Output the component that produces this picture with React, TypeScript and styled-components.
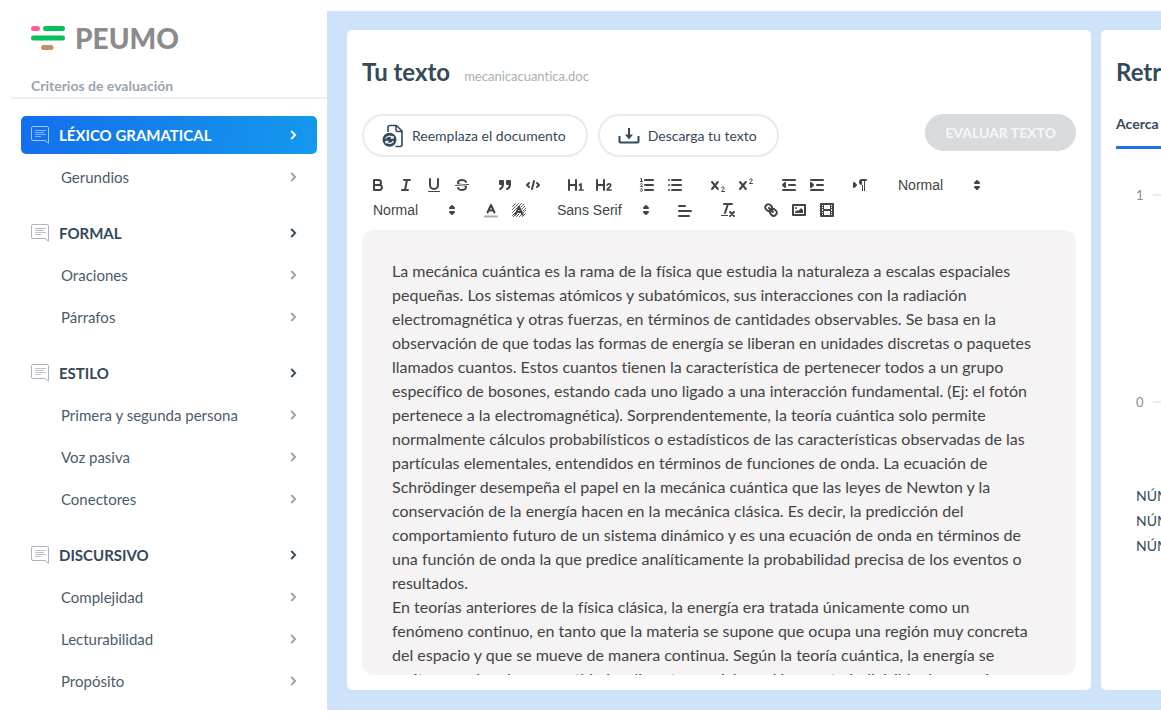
import React from 'react';
import styled, { createGlobalStyle, css } from 'styled-components';

const GlobalStyle = createGlobalStyle`
  *, *::before, *::after { box-sizing: border-box; }
  body {
    margin: 0;
    background: #fff;
    color: #34495a;
    font-family: Lato, "Open Sans", sans-serif;
    font-variant-ligatures: none;
    overflow: hidden;
  }
  button, select { font-family: inherit; color: inherit; }
`;

const Page = styled.div`
  display: flex;
  align-items: flex-start;
  min-height: 100vh;
  overflow: hidden;
`;

/* ---------- Sidebar ---------- */

const Sidebar = styled.aside`
  flex: 0 0 327px;
  padding: 23px 0 0 11px;
`;

const Brand = styled.a`
  display: flex;
  align-items: center;
  gap: 10px;
  height: 30px;
  margin-left: 20px;
  color: #8b8b8b;
  font-size: 28px;
  font-weight: 900;
  line-height: 30px;
  text-decoration: none;
`;

const SidebarTitle = styled.h2`
  margin: 0;
  padding: 23px 0 1px 20px;
  border-bottom: 2px solid #edf2f7;
  color: #9aa4ae;
  font-size: 14px;
  font-weight: 700;
  line-height: 20px;
`;

const Criteria = styled.nav`
  display: flex;
  flex-direction: column;
  gap: 18px;
  padding: 17px 10px 0;
`;

const CriteriaGroup = styled.section`
  display: flex;
  flex-direction: column;
  gap: 4px;
`;

const rowBase = css`
  display: flex;
  align-items: center;
  width: 100%;
  height: 38px;
  border: 0;
  border-radius: 5px;
  background: none;
  font-size: 15px;
  line-height: 20px;
  text-align: left;
  cursor: pointer;
`;

const GroupButton = styled.button<{ $active?: boolean }>`
  ${rowBase}
  gap: 10px;
  padding: 0 20px 0 10px;
  font-weight: 700;
  ${(p) => p.$active && css`
    background: linear-gradient(100deg, #146eee, #1499ec);
    color: #fff;
  `}
`;

const ItemButton = styled.button`
  ${rowBase}
  padding: 0 20px 0 40px;
  color: #4a5c6b;
`;

const RowLabel = styled.span`
  flex: 1;
`;

const CommentIcon = ({ active }: { active?: boolean }) => (
  <svg width="18" height="18" viewBox="0 0 18 18" fill="none" stroke={active ? '#9cc8fa' : '#b0b3bd'}>
    <path d="M17.500 17.200 14 14.500H2A1.500 1.500 0 0 1 .5 13V2A1.500 1.500 0 0 1 2 .5h14A1.500 1.500 0 0 1 17.500 2Z" />
    <path d="M4 4.500h11M4 6.500h9M4 8.500h11M4 10.500h6" strokeOpacity=".8" />
  </svg>
);

const Chevron = ({ color }: { color: string }) => (
  <svg width="7" height="10" viewBox="0 0 7 10" fill="none" stroke={color} strokeWidth="1.800">
    <path d="m1.200 1 4 4-4 4" />
  </svg>
);

/* ---------- Workspace ---------- */

const Workspace = styled.main`
  flex: 1;
  min-width: 0;
  display: grid;
  grid-template-columns: minmax(0, 1fr) 60px;
  gap: 10px;
  margin-top: 11px;
  padding: 19px 0 20px 20px;
  background: #cfe2fb;
`;

const EditorCard = styled.section`
  min-width: 0;
  padding: 24px 15px 15px;
  border-radius: 5px;
  background: #fff;
`;

const CardHeader = styled.header`
  display: flex;
  align-items: baseline;
  gap: 14px;
  height: 36px;
  white-space: nowrap;
`;

const CardTitle = styled.h1`
  margin: 0;
  font-size: 24px;
  font-weight: 700;
  line-height: 36px;
`;

const FileName = styled.span`
  color: #a7afb7;
  font-size: 13px;
`;

const Actions = styled.div`
  display: flex;
  align-items: flex-start;
  gap: 10px;
  margin-top: 24px;
`;

const OutlineButton = styled.button`
  display: flex;
  align-items: center;
  gap: 8px;
  height: 43px;
  padding: 0 20px 0 18px;
  border: 2px solid #e9eaeb;
  border-radius: 22px;
  background: #fff;
  font-size: 14px;
  white-space: nowrap;
  cursor: pointer;
`;

const EvaluateButton = styled.button`
  height: 37px;
  margin-left: auto;
  padding: 0 20px;
  border: 0;
  border-radius: 19px;
  background: #d7dbde;
  color: #f6f7f8;
  font-size: 14px;
  font-weight: 700;
  white-space: nowrap;
`;

const Toolbar = styled.div`
  display: flex;
  flex-wrap: wrap;
  gap: 1px 15px;
  margin-top: 16px;
  padding: 0 80px 0 2px;
  color: #444;
`;

const ToolGroup = styled.div`
  display: flex;
`;

const ToolButton = styled.button`
  width: 28px;
  height: 24px;
  padding: 3px 5px;
  border: 0;
  background: none;
  cursor: pointer;
`;

const Glyph = styled.svg`
  display: block;
  width: 18px;
  height: 18px;
  fill: none;
  stroke: #444;
  stroke-width: 2;
  stroke-linecap: round;
  stroke-linejoin: round;

  .fill { fill: #444; stroke: none; }
  .both { fill: #444; }
  .thin { stroke-width: 1; }
  .even { fill-rule: evenodd; }
`;

const Picker = styled.label<{ $wide?: boolean }>`
  display: grid;
  grid-template-columns: 1fr 18px;
  align-items: center;
  width: ${(p) => (p.$wide ? 108 : 98)}px;
  height: 24px;
`;

const PickerSelect = styled.select`
  grid-area: 1 / 1 / 2 / 3;
  width: 100%;
  height: 24px;
  padding: 0 18px 0 9px;
  border: 0;
  appearance: none;
  background: none;
  font-family: "Liberation Sans", Arial, sans-serif;
  font-size: 14px;
  line-height: 24px;
`;

const PickerArrows = styled(Glyph)`
  grid-area: 1 / 2 / 2 / 3;
  pointer-events: none;
`;

const Editor = styled.article`
  height: calc(100vh - 280px);
  min-height: 200px;
  margin-top: 8px;
  padding: 29px 30px 0;
  border-radius: 12px;
  background: #f5f3f4;
  color: #444;
  font-size: 16px;
  line-height: 24px;
  overflow: hidden;
`;

const Paragraph = styled.p`
  margin: 0;
  white-space: pre;
`;

/* ---------- Feedback ---------- */

const FeedbackCard = styled.section`
  padding: 24px 0 15px 15px;
  border-radius: 5px 0 0 5px;
  background: #fff;
  overflow: hidden;
  white-space: nowrap;
`;

const Tab = styled.button`
  display: block;
  height: 43px;
  margin-top: 16px;
  padding: 0 0 6px;
  border: 0;
  border-bottom: 3px solid #1b74ee;
  background: none;
  font-size: 14px;
  font-weight: 700;
`;

const Chart = styled.div`
  display: flex;
  flex-direction: column;
  justify-content: space-between;
  height: 227px;
  margin: 36px 0 0 20px;
`;

const AxisRow = styled.div`
  display: flex;
  align-items: center;
  gap: 9px;
  height: 20px;
  color: #8d8d8d;
  font-size: 13px;

  &::after {
    content: "";
    flex: 1;
    height: 2px;
    background: #ededed;
  }
`;

const Stats = styled.ul`
  margin: 71px 0 0 20px;
  padding: 0;
  list-style: none;
  font-size: 14px;
  line-height: 25px;
`;

/* ---------- Data ---------- */

const criteria = [
  { name: 'LÉXICO GRAMATICAL', items: ['Gerundios'] },
  { name: 'FORMAL', items: ['Oraciones', 'Párrafos'] },
  { name: 'ESTILO', items: ['Primera y segunda persona', 'Voz pasiva', 'Conectores'] },
  { name: 'DISCURSIVO', items: ['Complejidad', 'Lecturabilidad', 'Propósito'] },
];

const firstParagraph = [
  'La mecánica cuántica es la rama de la física que estudia la naturaleza a escalas espaciales',
  'pequeñas. Los sistemas atómicos y subatómicos, sus interacciones con la radiación',
  'electromagnética y otras fuerzas, en términos de cantidades observables. Se basa en la',
  'observación de que todas las formas de energía se liberan en unidades discretas o paquetes',
  'llamados cuantos. Estos cuantos tienen la característica de pertenecer todos a un grupo',
  'específico de bosones, estando cada uno ligado a una interacción fundamental. (Ej: el fotón',
  'pertenece a la electromagnética). Sorprendentemente, la teoría cuántica solo permite',
  'normalmente cálculos probabilísticos o estadísticos de las características observadas de las',
  'partículas elementales, entendidos en términos de funciones de onda. La ecuación de',
  'Schrödinger desempeña el papel en la mecánica cuántica que las leyes de Newton y la',
  'conservación de la energía hacen en la mecánica clásica. Es decir, la predicción del',
  'comportamiento futuro de un sistema dinámico y es una ecuación de onda en términos de',
  'una función de onda la que predice analíticamente la probabilidad precisa de los eventos o',
  'resultados.',
].join('\n');

const secondParagraph = [
  'En teorías anteriores de la física clásica, la energía era tratada únicamente como un',
  'fenómeno continuo, en tanto que la materia se supone que ocupa una región muy concreta',
  'del espacio y que se mueve de manera continua. Según la teoría cuántica, la energía se',
  'emite o se absorbe en cantidades discretas y mínimas. Un cuanto indivisible de energía',
].join('\n');

const glyphs: Record<string, React.ReactNode> = {
  Negrita: (
    <>
      <path d="M5,4H9.500A2.500,2.500,0,0,1,12,6.500v0A2.500,2.500,0,0,1,9.500,9H5V4Z" />
      <path d="M5,9h5.500A2.500,2.500,0,0,1,13,11.500v0A2.500,2.500,0,0,1,10.500,14H5V9Z" />
    </>
  ),
  Cursiva: <path d="M7 4h6M5 14h6M8 14l2-10" />,
  Subrayado: (
    <>
      <path d="M5,3V9a4.012,4.012,0,0,0,4,4H9a4.012,4.012,0,0,0,4-4V3" />
      <rect className="fill" height="1" width="12" x="3" y="15" />
    </>
  ),
  Tachado: (
    <>
      <path className="thin" d="M15.500 8.500l-13 1" />
      <path className="fill" d="M9.007,8C6.542,7.791,6,7.519,6,6.500,6,5.792,7.283,5,9,5c1.571,0,2.765.679,2.969,1.309a1,1,0,0,0,1.900-.617C13.356,4.106,11.354,3,9,3,6.200,3,4,4.538,4,6.500a3.200,3.200,0,0,0,.5,1.843Z" />
      <path className="fill" d="M8.984,10C11.457,10.208,12,10.479,12,11.500c0,0.708-1.283,1.500-3,1.500-1.571,0-2.765-.679-2.969-1.309a1,1,0,1,0-1.900.617C4.644,13.894,6.646,15,9,15c2.800,0,5-1.538,5-3.500a3.200,3.200,0,0,0-.5-1.843Z" />
    </>
  ),
  Cita: (
    <>
      <rect className="both" height="3" width="3" x="4" y="5" />
      <rect className="both" height="3" width="3" x="11" y="5" />
      <path className="both even" d="M7,8c0,4.031-3,5-3,5" />
      <path className="both even" d="M14,8c0,4.031-3,5-3,5" />
    </>
  ),
  Código: <path d="M5 7 3 9l2 2M13 7l2 2-2 2M10 5 8 13" />,
  'Encabezado 1': (
    <>
      <path d="M2 4v10M9 4v10M2 9h7" />
      <path strokeWidth="1.700" d="m12.500 9 1.500-1.200v6.200M12.500 14h3.500" />
    </>
  ),
  'Encabezado 2': (
    <>
      <path d="M2 4v10M9 4v10M2 9h7" />
      <path strokeWidth="1.700" d="M12.200 9c1-1.700 3.600-1.400 3.500.5-.1 1.700-3.300 2.600-3.500 4.500h3.800" />
    </>
  ),
  'Lista numerada': (
    <>
      <path d="M7 4h8M7 9h8M7 14h8" />
      <path className="thin" d="M2.500 5.500h2M2.500 2.900l1-.4v3M4.500 10.500h-2c0-.234,1.850-1.076,1.850-2.234A0.959,0.959,0,0,0,2.500,8.156M2.500 14.846a0.959,0.959,0,0,0,1.850-.109A0.700,0.700,0,0,0,3.750,14a0.688,0.688,0,0,0,.6-0.736,0.959,0.959,0,0,0-1.850-.109" />
    </>
  ),
  'Lista con viñetas': <path d="M6 4h9M6 9h9M6 14h9M3 4h0M3 9h0M3 14h0" />,
  Subíndice: (
    <>
      <path d="m3 6 5.800 7M8.800 6 3 13" />
      <path className="thin" d="M12.500 11.800c.3-1.400 2.700-1.300 2.700.2 0 1.500-2.500 2-2.700 3.500h3" />
    </>
  ),
  Superíndice: (
    <>
      <path d="m3 6 5.800 7M8.800 6 3 13" />
      <path className="thin" d="M12.500 3.800c.3-1.400 2.700-1.300 2.700.2 0 1.500-2.500 2-2.700 3.500h3" />
    </>
  ),
  'Reducir sangría': (
    <>
      <path d="M3 14h12M3 4h12M9 9h6" />
      <path d="M5 7v4L3 9Z" />
    </>
  ),
  'Aumentar sangría': (
    <>
      <path d="M3 14h12M3 4h12M9 9h6" />
      <path className="both" d="M3 7v4l2-2Z" />
    </>
  ),
  Dirección: (
    <>
      <path className="both" d="M3 11l2-2-2-2Z" />
      <path d="M15 4h-4" />
      <path className="fill" d="M11,3a3,3,0,0,0,0,6h1V3H11ZM11 4h1v11h-1ZM13 4h1v11h-1Z" />
    </>
  ),
  'Color del texto': (
    <>
      <path d="M5.500 11.500 9 4l3.500 7.500M6.800 9.500h4.400" />
      <path stroke="#aaa" d="M3 15.500h12" />
    </>
  ),
  'Color de fondo': (
    <>
      <path className="thin" strokeDasharray="1.500 1" d="M2.500 5.500l3-3M2.500 8.500l6-6M2.500 11.500l9-9M2.500 14.500l3-3M11 6l3.500-3.500M12 8l3.500-3.500M13 10l2.500-2.500M3.500 15.500l3-3M6.500 15.500l2.500-2.500M9.500 15.500l6-6M12.500 15.500l3-3" />
      <path d="M5.500 13.500 9 6l3.500 7.500M6.800 11h4.400" />
    </>
  ),
  Alineación: <path d="M3 10h12M3 15h10M3 5h6" />,
  'Quitar formato': (
    <>
      <path d="M5 3h8M6 12 9 3M11 11l4 4M15 11l-4 4" />
      <rect className="fill" height="1" width="7" x="2" y="14" />
    </>
  ),
  Enlace: (
    <>
      <path d="M7 7l4 4" />
      <path className="even" d="M8.900,4.577a3.476,3.476,0,0,1,.36,4.679A3.476,3.476,0,0,1,4.577,8.900C3.185,7.500,2.035,6.400,4.217,4.217S7.500,3.185,8.900,4.577Z" />
      <path className="even" d="M13.423,9.100a3.476,3.476,0,0,0-4.679-.36,3.476,3.476,0,0,0,.36,4.679c1.392,1.392,2.500,2.542,4.679.36S14.815,10.500,13.423,9.100Z" />
    </>
  ),
  Imagen: (
    <>
      <rect height="10" width="12" x="3" y="4" />
      <circle className="fill" cx="6" cy="7" r="1" />
      <path className="fill even" d="M5 12v-1l2-2 1 1 3-3 2 2v3Z" />
    </>
  ),
  Video: (
    <>
      <rect height="12" width="12" x="3" y="3" />
      <path className="fill" d="M5 3h1v12H5ZM12 3h1v12h-1ZM5 8h8v2H5ZM3 5h3v1H3ZM3 7h3v1H3ZM3 10h3v1H3ZM3 12h3v1H3ZM12 5h3v1h-3ZM12 7h3v1h-3ZM12 10h3v1h-3ZM12 12h3v1h-3Z" />
    </>
  ),
};

const Tools = ({ names }: { names: string[] }) => (
  <ToolGroup>
    {names.map((name) => (
      <ToolButton key={name} type="button" aria-label={name}>
        <Glyph viewBox="0 0 18 18" aria-hidden="true">{glyphs[name]}</Glyph>
      </ToolButton>
    ))}
  </ToolGroup>
);

const FormatPicker = ({ label, value, wide }: { label: string; value: string; wide?: boolean }) => (
  <Picker $wide={wide}>
    <PickerSelect aria-label={label} defaultValue={value}>
      <option>{value}</option>
    </PickerSelect>
    <PickerArrows viewBox="0 0 18 18" aria-hidden="true">
      <path className="both" d="M6 11l2 2 2-2ZM6 7l2-2 2 2Z" />
    </PickerArrows>
  </Picker>
);

const ReplaceIcon = () => (
  <svg width="22" height="24" viewBox="0 0 22 24" fill="none" stroke="#34495a" strokeWidth="1.600" strokeLinejoin="round">
    <path d="M6 8V3.500A2 2 0 0 1 8 1.500h6.500L20 7v13.500a2 2 0 0 1-2 2h-4.500M14 1.800V6a1.500 1.500 0 0 0 1.500 1.500H20" />
    <circle cx="7.500" cy="15.800" r="7" fill="#34495a" stroke="none" />
    <path stroke="#fff" strokeWidth="1.200" d="M3.600 14.600c1-2.600 5-3.400 7.200-.8M11.400 17c-1 2.600-5 3.400-7.200.8M8.600 14.200h2.500v-2.200M6.400 17.400H3.900v2.200" />
  </svg>
);

const DownloadIcon = () => (
  <svg width="22" height="18" viewBox="0 0 22 18" fill="none" stroke="#34495a" strokeWidth="2">
    <path d="M1.500 9v5.500a1 1 0 0 0 1 1h17a1 1 0 0 0 1-1V9M11 1v8" />
    <path d="M7 7.500h8L11 12.500Z" fill="#34495a" stroke="none" />
  </svg>
);

export default function App() {
  return (
    <>
      <GlobalStyle />
      <Page>
        <Sidebar>
          <Brand href="#">
            <svg width="34" height="26" viewBox="0 0 34 26" strokeWidth="5" strokeLinecap="round">
              <path stroke="#ff5a9e" d="M2.500 3.500H6.500" />
              <path stroke="#05c158" d="M14.500 3.500H31.500M2.500 13H31.500" />
              <path stroke="#bf9268" d="M12.500 22.500H20" />
            </svg>
            PEUMO
          </Brand>
          <SidebarTitle>Criterios de evaluación</SidebarTitle>
          <Criteria>
            {criteria.map((group, index) => (
              <CriteriaGroup key={group.name}>
                <GroupButton type="button" $active={index === 0}>
                  <CommentIcon active={index === 0} />
                  <RowLabel>{group.name}</RowLabel>
                  <Chevron color={index === 0 ? '#fff' : '#34495a'} />
                </GroupButton>
                {group.items.map((item) => (
                  <ItemButton key={item} type="button">
                    <RowLabel>{item}</RowLabel>
                    <Chevron color="#98a2ac" />
                  </ItemButton>
                ))}
              </CriteriaGroup>
            ))}
          </Criteria>
        </Sidebar>

        <Workspace>
          <EditorCard>
            <CardHeader>
              <CardTitle>Tu texto</CardTitle>
              <FileName>mecanicacuantica.doc</FileName>
            </CardHeader>
            <Actions>
              <OutlineButton type="button">
                <ReplaceIcon />
                Reemplaza el documento
              </OutlineButton>
              <OutlineButton type="button">
                <DownloadIcon />
                Descarga tu texto
              </OutlineButton>
              <EvaluateButton type="button" disabled>EVALUAR TEXTO</EvaluateButton>
            </Actions>
            <Toolbar>
              <Tools names={['Negrita', 'Cursiva', 'Subrayado', 'Tachado']} />
              <Tools names={['Cita', 'Código']} />
              <Tools names={['Encabezado 1', 'Encabezado 2']} />
              <Tools names={['Lista numerada', 'Lista con viñetas']} />
              <Tools names={['Subíndice', 'Superíndice']} />
              <Tools names={['Reducir sangría', 'Aumentar sangría']} />
              <Tools names={['Dirección']} />
              <FormatPicker label="Tamaño" value="Normal" />
              <FormatPicker label="Encabezado" value="Normal" />
              <Tools names={['Color del texto', 'Color de fondo']} />
              <FormatPicker label="Fuente" value="Sans Serif" wide />
              <Tools names={['Alineación']} />
              <Tools names={['Quitar formato']} />
              <Tools names={['Enlace', 'Imagen', 'Video']} />
            </Toolbar>
            <Editor>
              <Paragraph>{firstParagraph}</Paragraph>
              <Paragraph>{secondParagraph}</Paragraph>
            </Editor>
          </EditorCard>

          <FeedbackCard>
            <CardTitle>Retroalimentación</CardTitle>
            <Tab type="button">Acerca de</Tab>
            <Chart>
              <AxisRow>1</AxisRow>
              <AxisRow>0</AxisRow>
            </Chart>
            <Stats>
              <li>NÚMERO</li>
              <li>NÚMERO</li>
              <li>NÚMERO</li>
            </Stats>
          </FeedbackCard>
        </Workspace>
      </Page>
    </>
  );
}
